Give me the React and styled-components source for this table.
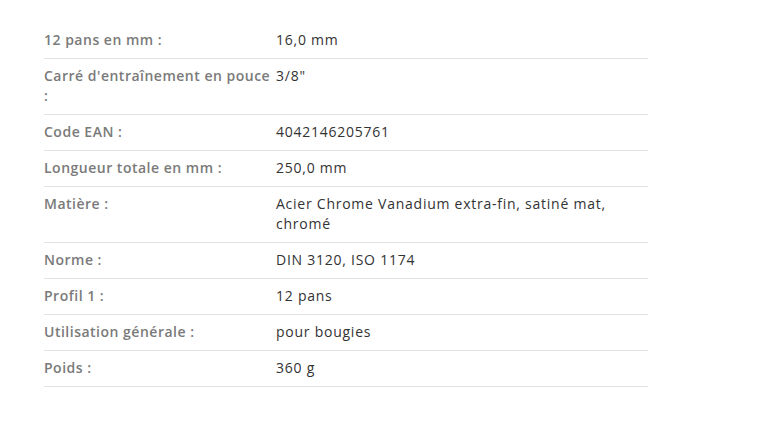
import React from "react";
import styled, { createGlobalStyle } from "styled-components";

const GlobalStyle = createGlobalStyle`
  body {
    margin: 0;
    background: #fff;
    font-family: "Open Sans", "Liberation Sans", sans-serif;
  }
`;

const Page = styled.div`
  padding: 23px 0 0 44px;
`;

const Table = styled.table`
  width: 604px;
  border-collapse: collapse;
  table-layout: fixed;
  font-size: 14px;
  line-height: 20px;
`;

const Tr = styled.tr`
  border-bottom: 1px solid #e2e2e2;
`;

const Th = styled.th`
  width: 232px;
  padding: 7px 0 8px;
  text-align: start;
  vertical-align: top;
  font-weight: 600;
  color: #7a7a7a;
  letter-spacing: 0.5px;
`;

const Td = styled.td`
  padding: 7px 0 8px;
  vertical-align: top;
  color: #333;
  letter-spacing: 0.75px;
`;

const specs = [
  ["12 pans en mm :", "16,0 mm"],
  ["Carré d'entraînement en pouce :", "3/8\""],
  ["Code EAN :", "4042146205761"],
  ["Longueur totale en mm :", "250,0 mm"],
  ["Matière :", "Acier Chrome Vanadium extra-fin, satiné mat, chromé"],
  ["Norme :", "DIN 3120, ISO 1174"],
  ["Profil 1 :", "12 pans"],
  ["Utilisation générale :", "pour bougies"],
  ["Poids :", "360 g"],
];

const App = () => (
  <Page>
    <GlobalStyle />
    <Table>
      <tbody>
        {specs.map(([label, value], i) => (
          <Tr key={i}>
            <Th>{label}</Th>
            <Td>{value}</Td>
          </Tr>
        ))}
      </tbody>
    </Table>
  </Page>
);

export default App;
